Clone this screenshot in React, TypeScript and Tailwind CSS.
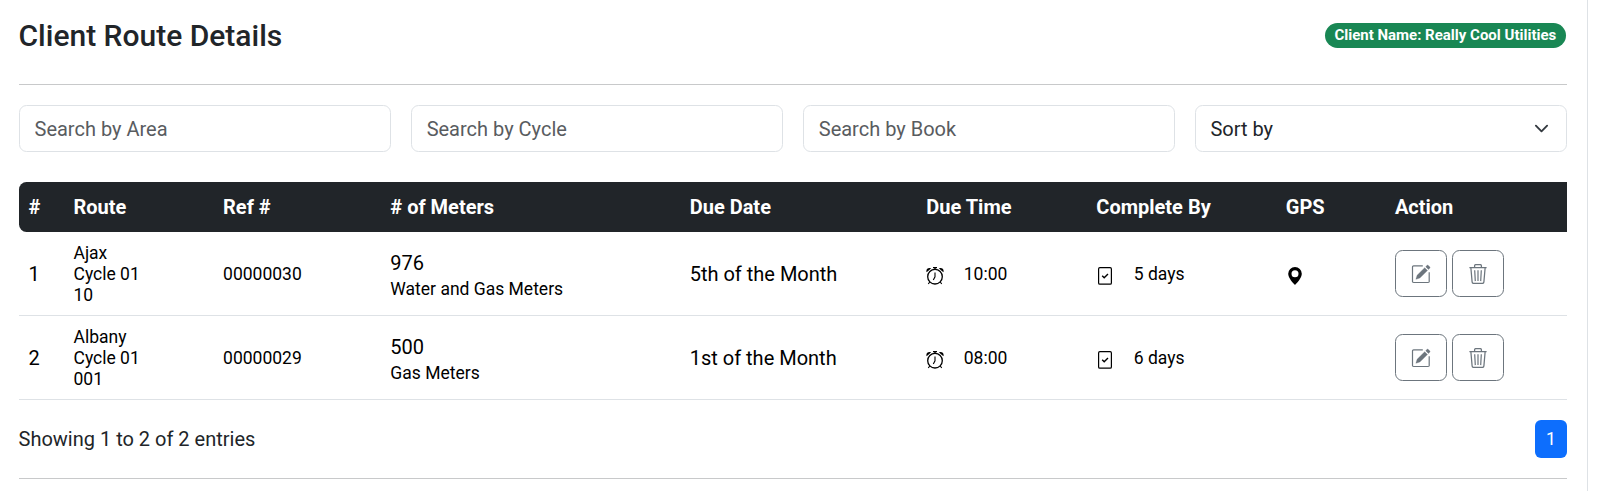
const columns = [
  { label: "#", width: "w-[45px]" },
  { label: "Route", width: "w-[149.5px]" },
  { label: "Ref #", width: "w-[167.25px]" },
  { label: "# of Meters", width: "w-[299.25px]" },
  { label: "Due Date", width: "w-[236.5px]" },
  { label: "Due Time", width: "w-[170px]" },
  { label: "Complete By", width: "w-[189.5px]" },
  { label: "GPS", width: "w-[109px]" },
  { label: "Action", width: "w-[182px]" },
];

const routes = [
  { id: 1, route: ["Ajax", "Cycle 01", "10"], reference: "00000030", meters: 976, kind: "Water and Gas Meters", date: "5th of the Month", time: "10:00", days: "5 days", gps: true },
  { id: 2, route: ["Albany", "Cycle 01", "001"], reference: "00000029", meters: 500, kind: "Gas Meters", date: "1st of the Month", time: "08:00", days: "6 days", gps: false },
];

function AlarmIcon() {
  return (
    <svg width="18" height="18" viewBox="0 0 18 18" fill="none" stroke="black">
      <circle cx="9" cy="9.700" r="7.300" strokeWidth="1.300" />
      <path d="M7 .6h4M9 1v2" strokeWidth="1.400" />
      <path d="M.6 5.300C-.4 2.600 2 .3 5 1.400ZM17.400 5.300c1-2.700-1.400-5-4.400-3.900Z" fill="black" stroke="none" />
      <path d="M9 5.500v4.300L7.300 13M3.700 15l-1.400 2M14.300 15l1.400 2" strokeWidth="1.100" />
    </svg>
  );
}

function TaskIcon() {
  return (
    <svg width="14" height="18" viewBox="0 0 14 18" fill="none" stroke="black">
      <rect x=".6" y=".6" width="12.800" height="16.600" rx="1.300" strokeWidth="1.200" />
      <path d="m4.200 8.700 2 2L10 7.100" strokeWidth="1.400" />
    </svg>
  );
}

function PinIcon() {
  return (
    <svg width="14" height="18" viewBox="0 0 14 18">
      <path fillRule="evenodd" d="M7 0a6.800 6.800 0 0 1 6.800 6.800C13.800 11 9 16 7 18 5 16 .2 11 .2 6.800A6.800 6.800 0 0 1 7 0Zm0 3.300a3.500 3.500 0 1 0 0 7 3.500 3.500 0 0 0 0-7Z" />
    </svg>
  );
}

function EditIcon() {
  return (
    <svg width="20" height="20" viewBox="0 0 20 20" fill="none" stroke="currentColor">
      <path d="M11.800 1.900H2.600A1.100 1.100 0 0 0 1.500 3v14.400a1.100 1.100 0 0 0 1.100 1.100h14.500a1.100 1.100 0 0 0 1.100-1.100V8.200" strokeWidth="1.200" />
      <path d="M4.900 15.300 6.100 11.200 13.700 3.700 16.500 6.400 8.900 14ZM14.700 2.700l1.400-1.400q.5-.4 1 0l1.800 1.800q.4.500 0 1l-1.400 1.400Z" fill="currentColor" stroke="currentColor" strokeWidth=".3" />
    </svg>
  );
}

function TrashIcon() {
  return (
    <svg width="20" height="20" viewBox="0 0 20 20" fill="none" stroke="currentColor">
      <path d="M1.400 3.700h17.200M6.600 3.500V1.800Q6.600.6 7.800.6h4.400q1.200 0 1.200 1.200v1.700" strokeWidth="1.250" />
      <path d="m2.900 4 1.200 13.900q.1 1.500 1.600 1.500h8.600q1.500 0 1.600-1.500L17.100 4" strokeWidth="1.250" />
      <path d="m6.700 6.200.6 10.900M10 6.200v10.900M13.300 6.200l-.6 10.900" strokeWidth="1.200" />
    </svg>
  );
}

const field = "h-[47px] w-full rounded-[7.5px] border border-[#dee2e6] bg-white text-xl";
const cell = "border-b border-[#dee2e6] px-2.5 align-middle";
const action = "flex h-[47px] w-[52px] items-center justify-center rounded-[7.5px] border border-[#6c757d] text-[#6c757d]";

export default function App() {
  return (
    <div className="h-[491px] w-[1588px] border-r border-[#dee2e6] bg-white pr-5 pl-[18.5px] font-[Roboto,sans-serif] text-xl text-[#212529]">
      <header className="flex h-[84px] justify-between pt-[18px]">
        <h1 className="text-[30px] leading-9 font-medium">Client Route Details</h1>
        <span className="mt-[5px] mr-px h-[25px] rounded-full bg-[#198754] px-[9.75px] text-[15px] leading-[24px] font-bold text-white">
          Client Name: Really Cool Utilities
        </span>
      </header>
      <hr className="border-[#c8c9ca]" />
      <div className="mt-5 grid grid-cols-4 gap-5">
        <input className={`${field} px-[15px] placeholder:text-[#595c5f]`} placeholder="Search by Area" />
        <input className={`${field} px-[15px] placeholder:text-[#595c5f]`} placeholder="Search by Cycle" />
        <input className={`${field} px-[15px] placeholder:text-[#595c5f]`} placeholder="Search by Book" />
        <button className={`${field} flex items-center justify-between px-[14.5px]`}>
          Sort by
          <svg width="15" height="15" viewBox="0 0 16 16" fill="none" stroke="#343a40" strokeWidth="2" strokeLinecap="round" strokeLinejoin="round" className="mr-[3px]">
            <path d="m2 5 6 6 6-6" />
          </svg>
        </button>
      </div>
      <table className="mt-[30px] w-full table-fixed border-separate border-spacing-0">
        <thead>
          <tr className="h-[50px] text-left text-white">
            {columns.map((column) => (
              <th key={column.label} className={`${column.width} bg-[#212529] px-2.5 font-bold first:rounded-l-[7.5px]`}>
                {column.label}
              </th>
            ))}
          </tr>
        </thead>
        <tbody className="text-black">
          {routes.map((row) => (
            <tr key={row.id} className="h-[84px]">
              <td className={cell}>{row.id}</td>
              <td className={`${cell} pt-0.5 text-[17.5px] leading-[21px]`}>
                {row.route.map((line) => (
                  <div key={line}>{line}</div>
                ))}
              </td>
              <td className={`${cell} pt-0.5 text-[17.5px]`}>{row.reference}</td>
              <td className={`${cell} pt-[5px]`}>
                <div className="leading-[26px]">{row.meters}</div>
                <div className="text-[17.5px] leading-[26px]">{row.kind}</div>
              </td>
              <td className={cell}>{row.date}</td>
              <td className={`${cell} pt-0.5`}>
                <div className="-ml-[0.5px] flex items-center gap-5 text-[17.5px]">
                  <span className="pt-0.5"><AlarmIcon /></span>
                  {row.time}
                </div>
              </td>
              <td className={`${cell} pt-0.5`}>
                <div className="flex items-center gap-[22px] pl-[1.5px] text-[17.5px]">
                  <span className="pt-0.5"><TaskIcon /></span>
                  {row.days}
                </div>
              </td>
              <td className={cell}>
                {row.gps && <div className="pt-[5px] pl-[2px]"><PinIcon /></div>}
              </td>
              <td className={cell}>
                <div className="flex gap-[5px]">
                  <button className={action} aria-label="Edit"><EditIcon /></button>
                  <button className={action} aria-label="Delete"><TrashIcon /></button>
                </div>
              </td>
            </tr>
          ))}
        </tbody>
      </table>
      <footer className="flex h-[78px] items-center justify-between">
        <p>Showing 1 to 2 of 2 entries</p>
        <button className="h-[38px] w-8 rounded-md bg-[#0d6efd] text-[17.5px] text-white">1</button>
      </footer>
      <hr className="border-[#c8c9ca]" />
    </div>
  );
}
